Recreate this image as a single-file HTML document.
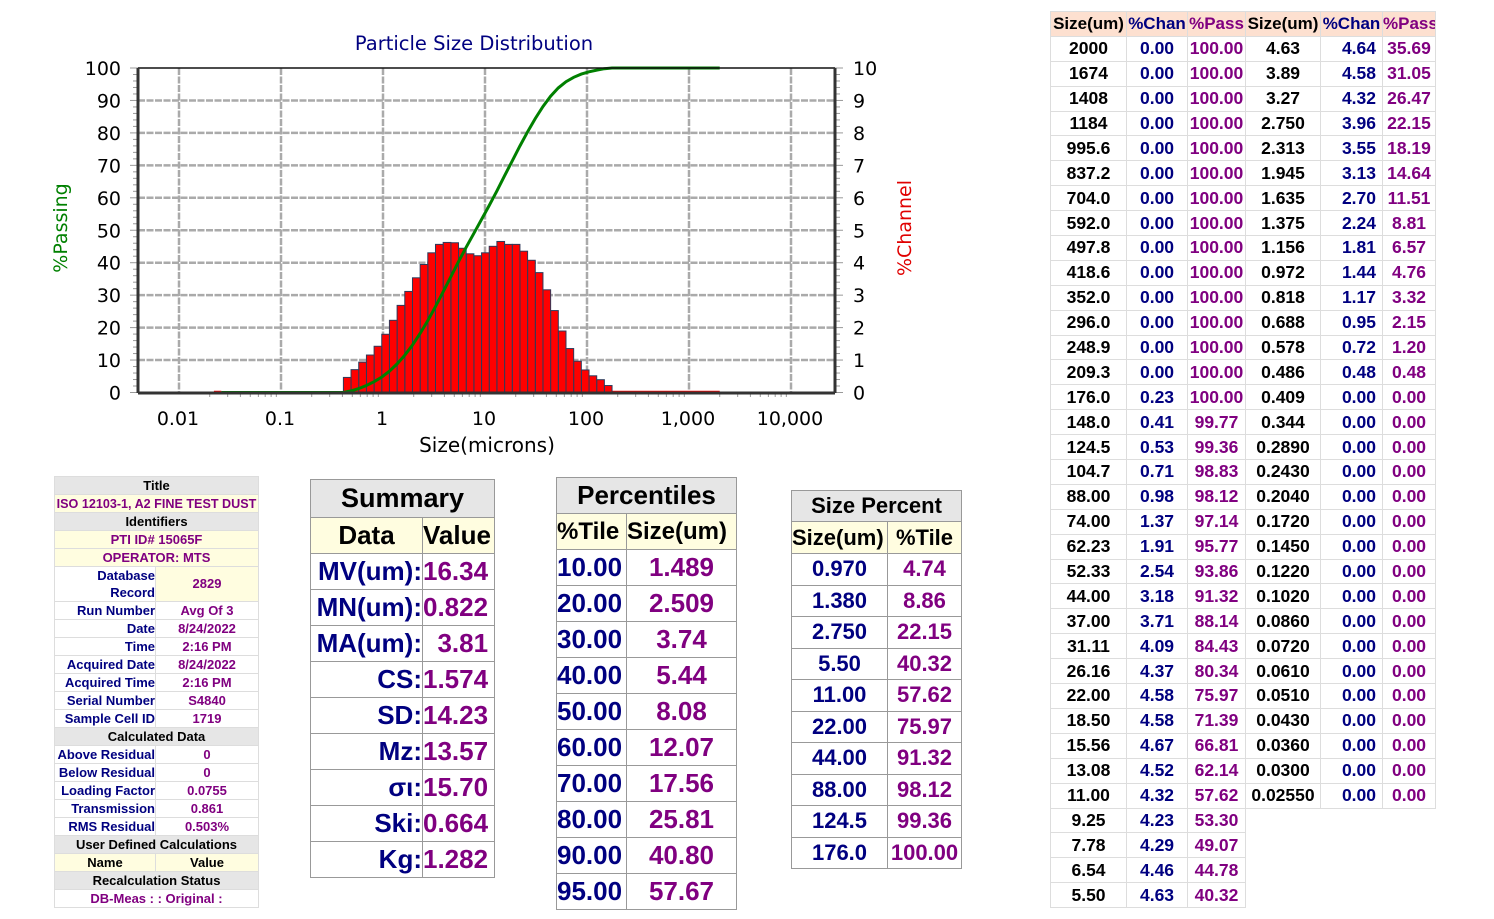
<!DOCTYPE html>
<html><head><meta charset="utf-8">
<style>
*{margin:0;padding:0;box-sizing:border-box}
body{width:1494px;height:919px;background:#fff;position:relative;overflow:hidden;font-family:"Liberation Sans","DejaVu Sans",sans-serif;font-weight:bold}
table{border-collapse:collapse;position:absolute;table-layout:fixed}
td{padding:0;text-align:center;white-space:nowrap;overflow:hidden}
.g{background:#e6e6e6}.y{background:#fffde0}
.nv{color:#000080}.pu{color:#800080}.bk{color:#000}
#lt td{border:1px solid #ddd;font-size:13px;height:18px;line-height:16px}
#sm td,#pc td,#sp td{border:1px solid #999}
#rt td{border:1px solid #ddd;font-size:17.5px;height:24.9px;line-height:23px}
#rt tr.hd td{background:#fde0d0;font-size:17px}
</style></head><body>
<svg id="ch" width="1000" height="470" style="position:absolute;left:0;top:0" font-family="DejaVu Sans, sans-serif" font-weight="normal"></svg>

<table id="lt" style="left:54px;top:476px;width:204px">
<col style="width:101px"><col style="width:103px">
<tr><td colspan=2 class="g bk">Title</td></tr>
<tr><td colspan=2 class="y pu" style="font-size:12.6px">ISO 12103-1, A2 FINE TEST DUST</td></tr>
<tr><td colspan=2 class="g bk">Identifiers</td></tr>
<tr><td colspan=2 class="y pu">PTI ID# 15065F</td></tr>
<tr><td colspan=2 class="y pu">OPERATOR: MTS</td></tr>
<tr><td class="nv" style="text-align:right;height:35px;line-height:17px">Database<br>Record</td><td class="y pu" style="height:35px">2829</td></tr>
<tr><td class="nv" style="text-align:right">Run Number</td><td class="pu">Avg Of 3</td></tr>
<tr><td class="nv" style="text-align:right">Date</td><td class="pu">8/24/2022</td></tr>
<tr><td class="nv" style="text-align:right">Time</td><td class="pu">2:16 PM</td></tr>
<tr><td class="nv" style="text-align:right">Acquired Date</td><td class="pu">8/24/2022</td></tr>
<tr><td class="nv" style="text-align:right">Acquired Time</td><td class="pu">2:16 PM</td></tr>
<tr><td class="nv" style="text-align:right">Serial Number</td><td class="pu">S4840</td></tr>
<tr><td class="nv" style="text-align:right">Sample Cell ID</td><td class="pu">1719</td></tr>
<tr><td colspan=2 class="g bk">Calculated Data</td></tr>
<tr><td class="nv" style="text-align:right">Above Residual</td><td class="pu">0</td></tr>
<tr><td class="nv" style="text-align:right">Below Residual</td><td class="pu">0</td></tr>
<tr><td class="nv" style="text-align:right">Loading Factor</td><td class="pu">0.0755</td></tr>
<tr><td class="nv" style="text-align:right">Transmission</td><td class="pu">0.861</td></tr>
<tr><td class="nv" style="text-align:right">RMS Residual</td><td class="pu">0.503%</td></tr>
<tr><td colspan=2 class="g bk">User Defined Calculations</td></tr>
<tr><td class="y bk">Name</td><td class="y bk">Value</td></tr>
<tr><td colspan=2 class="g bk">Recalculation Status</td></tr>
<tr><td colspan=2 class="pu">DB-Meas : : Original :</td></tr>
</table>

<table id="sm" style="left:310px;top:479px;width:184px">
<col style="width:112px"><col style="width:72px">
<tr><td colspan=2 class="g bk" style="height:38px;font-size:27px">Summary</td></tr>
<tr><td class="y bk" style="height:36px;font-size:26px">Data</td><td class="y bk" style="height:36px;font-size:26px;text-align:left">Value</td></tr>
</table>

<table id="pc" style="left:556px;top:477px;width:180px">
<col style="width:70px"><col style="width:110px">
<tr><td colspan=2 class="g bk" style="height:36px;font-size:26px">Percentiles</td></tr>
<tr><td class="y bk" style="height:36px;font-size:24px;text-align:left">%Tile</td><td class="y bk" style="font-size:24px;text-align:left">Size(um)</td></tr>
</table>

<table id="sp" style="left:791px;top:490px;width:170px">
<col style="width:96px"><col style="width:74px">
<tr><td colspan=2 class="g bk" style="height:31px;font-size:22px">Size Percent</td></tr>
<tr><td class="y bk" style="height:32px;font-size:22px;text-align:left">Size(um)</td><td class="y bk" style="font-size:22px">%Tile</td></tr>
</table>

<table id="rt" style="left:1050px;top:11px;width:385px">
<col style="width:76px"><col style="width:61px"><col style="width:58px"><col style="width:75px"><col style="width:62px"><col style="width:53px">
<tr class="hd"><td class="bk">Size(um)</td><td class="nv">%Chan</td><td class="pu">%Pass</td><td class="bk">Size(um)</td><td class="nv">%Chan</td><td class="pu">%Pass</td></tr>
</table>

<script>
var NS="http://www.w3.org/2000/svg",svg=document.getElementById('ch');
function el(t,a,txt){var e=document.createElementNS(NS,t);for(var k in a)e.setAttribute(k,a[k]);if(txt!==undefined)e.textContent=txt;svg.appendChild(e);return e;}
function X(d){return 383+102*Math.log10(d);}
function Y(p){return 392.5-3.245*p;}
var L=138,R=835,T=68,B=393;
for(var i=1;i<10;i++)el('line',{x1:L,x2:R,y1:Y(i*10),y2:Y(i*10),stroke:'#aaa','stroke-width':2.5,'stroke-dasharray':'7,1.5'});
[0.01,0.1,1,10,100,1000,10000].forEach(function(d){el('line',{x1:X(d),x2:X(d),y1:T,y2:B,stroke:'#aaa','stroke-width':2.5,'stroke-dasharray':'7,1.5'});});
for(var p=0;p<=100;p+=2){var w=p%10==0?8:5;el('line',{x1:L-w,x2:L,y1:Y(p),y2:Y(p),stroke:'#999','stroke-width':1});el('line',{x1:R,x2:R+w,y1:Y(p),y2:Y(p),stroke:'#999','stroke-width':1});}
for(var e=-2;e<4;e++)for(var m=2;m<10;m++){var xx=X(m*Math.pow(10,e));if(xx<R)el('line',{x1:xx,x2:xx,y1:B,y2:B+4,stroke:'#999'});}
var rows=[["2000","0.00","100.00"],["1674","0.00","100.00"],["1408","0.00","100.00"],["1184","0.00","100.00"],["995.6","0.00","100.00"],["837.2","0.00","100.00"],["704.0","0.00","100.00"],["592.0","0.00","100.00"],["497.8","0.00","100.00"],["418.6","0.00","100.00"],["352.0","0.00","100.00"],["296.0","0.00","100.00"],["248.9","0.00","100.00"],["209.3","0.00","100.00"],["176.0","0.23","100.00"],["148.0","0.41","99.77"],["124.5","0.53","99.36"],["104.7","0.71","98.83"],["88.00","0.98","98.12"],["74.00","1.37","97.14"],["62.23","1.91","95.77"],["52.33","2.54","93.86"],["44.00","3.18","91.32"],["37.00","3.71","88.14"],["31.11","4.09","84.43"],["26.16","4.37","80.34"],["22.00","4.58","75.97"],["18.50","4.58","71.39"],["15.56","4.67","66.81"],["13.08","4.52","62.14"],["11.00","4.32","57.62"],["9.25","4.23","53.30"],["7.78","4.29","49.07"],["6.54","4.46","44.78"],["5.50","4.63","40.32"],
["4.63","4.64","35.69"],["3.89","4.58","31.05"],["3.27","4.32","26.47"],["2.750","3.96","22.15"],["2.313","3.55","18.19"],["1.945","3.13","14.64"],["1.635","2.70","11.51"],["1.375","2.24","8.81"],["1.156","1.81","6.57"],["0.972","1.44","4.76"],["0.818","1.17","3.32"],["0.688","0.95","2.15"],["0.578","0.72","1.20"],["0.486","0.48","0.48"],["0.409","0.00","0.00"],["0.344","0.00","0.00"],["0.2890","0.00","0.00"],["0.2430","0.00","0.00"],["0.2040","0.00","0.00"],["0.1720","0.00","0.00"],["0.1450","0.00","0.00"],["0.1220","0.00","0.00"],["0.1020","0.00","0.00"],["0.0860","0.00","0.00"],["0.0720","0.00","0.00"],["0.0610","0.00","0.00"],["0.0510","0.00","0.00"],["0.0430","0.00","0.00"],["0.0360","0.00","0.00"],["0.0300","0.00","0.00"],["0.02550","0.00","0.00"]];
el('line',{x1:X(176),x2:X(2000),y1:B-1,y2:B-1,stroke:'red','stroke-width':2.5});
el('line',{x1:X(0.022),x2:X(0.026),y1:B-1,y2:B-1,stroke:'red','stroke-width':2.5});
for(var i=0;i<rows.length-1;i++){var c=+rows[i][1];if(c<=0)continue;var x1=X(+rows[i+1][0]),x2=X(+rows[i][0]);var h=c*32.45;el('rect',{x:x1,y:B-h,width:x2-x1,height:h,fill:'#ff0000',stroke:'#2e3a5a','stroke-width':1});}
var pts=[[X(0.026),Y(0)]];for(var i=rows.length-1;i>=0;i--){var s=+rows[i][0];if(s<0.4||s>200)continue;pts.push([X(s),Y(+rows[i][2])]);}pts.push([X(2000),Y(100)]);
el('polyline',{points:pts.map(function(p){return p[0].toFixed(1)+','+p[1].toFixed(1)}).join(' '),fill:'none',stroke:'#008000','stroke-width':3});
el('line',{x1:L,x2:R,y1:T,y2:T,stroke:'#111','stroke-width':1.5});
el('line',{x1:L,x2:L,y1:T,y2:B,stroke:'#333','stroke-width':3});
el('line',{x1:R,x2:R,y1:T,y2:B,stroke:'#333','stroke-width':3});
el('line',{x1:L,x2:R,y1:B,y2:B,stroke:'#333','stroke-width':3});
for(var i=0;i<=10;i++){el('text',{x:121,y:Y(i*10)+7,'text-anchor':'end','font-size':19,fill:'#000'},String(i*10));el('text',{x:853,y:Y(i*10)+7,'font-size':19,fill:'#000'},String(i));}
[["0.01",0.01],["0.1",0.1],["1",1],["10",10],["100",100],["1,000",1000],["10,000",10000]].forEach(function(a){el('text',{x:X(a[1])-1,y:425,'text-anchor':'middle','font-size':19,fill:'#000'},a[0]);});
el('text',{x:487,y:452,'text-anchor':'middle','font-size':20,fill:'#000'},'Size(microns)');
el('text',{x:474,y:50,'text-anchor':'middle','font-size':19.5,fill:'#000080'},'Particle Size Distribution');
el('text',{x:0,y:0,transform:'translate(67,228) rotate(-90)','text-anchor':'middle','font-size':19,fill:'#008000'},'%Passing');
el('text',{x:0,y:0,transform:'translate(911,228) rotate(-90)','text-anchor':'middle','font-size':19,fill:'#e00000'},'%Channel');

var rt=document.getElementById('rt'),h='';
var thick={6:1,10:1,18:1,22:1,26:1};
for(var i=0;i<35;i++){var a=rows[i],b=rows[i+35];var st=thick[i]?' style="border-bottom:1.5px solid #888"':'';
h+='<tr'+st+'><td class="bk">'+a[0]+'</td><td class="nv">'+a[1]+'</td><td class="pu">'+a[2]+'</td>';
if(b&&i+35<rows.length)h+='<td class="bk">'+b[0]+'</td><td class="nv" style="text-align:right;padding-right:6px">'+b[1]+'</td><td class="pu">'+b[2]+'</td>';else h+='<td colspan=3 style="border:none"></td>';h+='</tr>';}
rt.insertAdjacentHTML('beforeend',h);

var sm=[["MV(um):","16.34"],["MN(um):","0.822"],["MA(um):"," 3.81"],["CS:","1.574"],["SD:","14.23"],["Mz:","13.57"],["σι:","15.70"],["Ski:","0.664"],["Kg:","1.282"]],s='';
sm.forEach(function(r){s+='<tr><td class="nv" style="height:36px;font-size:26px;text-align:right">'+r[0]+'</td><td class="pu" style="font-size:26px;text-align:left">'+r[1].replace(' ','&nbsp;&nbsp;')+'</td></tr>';});
document.getElementById('sm').insertAdjacentHTML('beforeend',s);
var pc=[["10.00","1.489"],["20.00","2.509"],["30.00","3.74"],["40.00","5.44"],["50.00","8.08"],["60.00","12.07"],["70.00","17.56"],["80.00","25.81"],["90.00","40.80"],["95.00","57.67"]];s='';
pc.forEach(function(r){s+='<tr><td class="nv" style="height:36px;font-size:26px;text-align:left">'+r[0]+'</td><td class="pu" style="font-size:26px">'+r[1]+'</td></tr>';});
document.getElementById('pc').insertAdjacentHTML('beforeend',s);
var sp=[["0.970","4.74"],["1.380","8.86"],["2.750","22.15"],["5.50","40.32"],["11.00","57.62"],["22.00","75.97"],["44.00","91.32"],["88.00","98.12"],["124.5","99.36"],["176.0","100.00"]];s='';
sp.forEach(function(r){s+='<tr><td class="nv" style="height:31.5px;font-size:22px">'+r[0]+'</td><td class="pu" style="font-size:22px">'+r[1]+'</td></tr>';});
document.getElementById('sp').insertAdjacentHTML('beforeend',s);
</script>
</body></html>
